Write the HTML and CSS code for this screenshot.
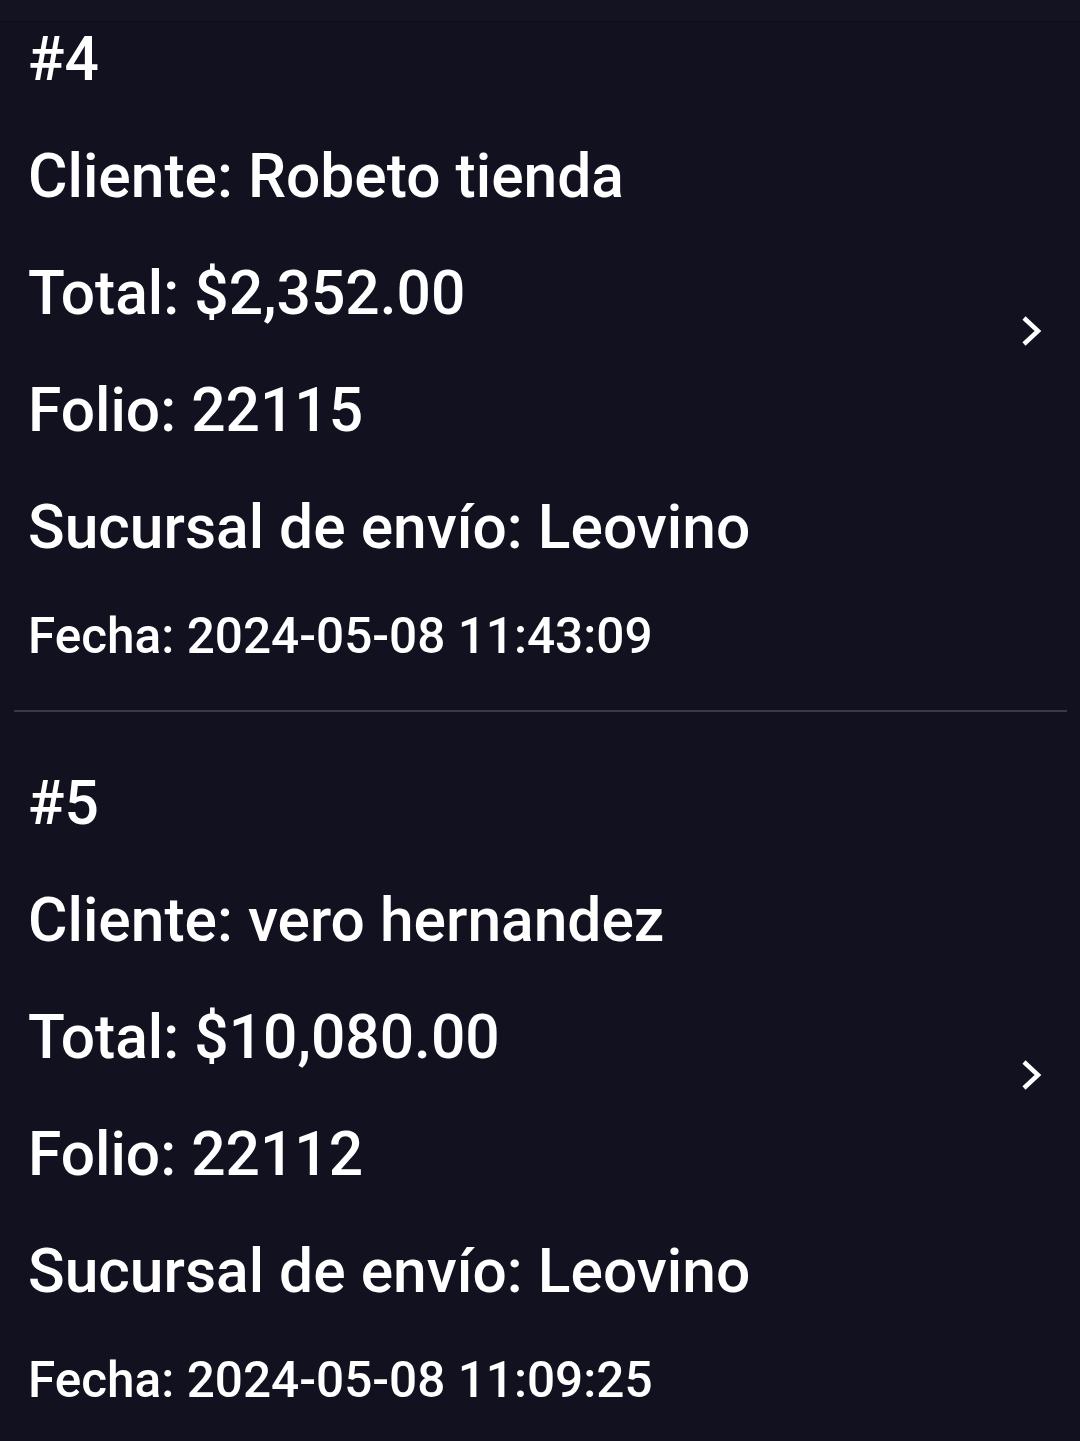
FILE: index.html
```html
<!DOCTYPE html>
<html lang="es">
<head>
    <meta charset="UTF-8">
    <meta name="viewport" content="width=device-width, initial-scale=1.0">
    <title>Pedidos</title>
    <link rel="stylesheet" href="styles.css">
</head>
<body>

    <div class="top-edge"></div>

    <!-- Order list -->
    <div class="order-list">
        <div class="order">
            <div class="order-info">
                <div class="order-line">#4</div>
                <div class="order-line">Cliente: Robeto tienda</div>
                <div class="order-line">Total: $2,352.00</div>
                <div class="order-line">Folio: 22115</div>
                <div class="order-line">Sucursal de envío: Leovino</div>
                <div class="order-line order-date">Fecha: 2024-05-08 11:43:09</div>
            </div>
            <svg class="chevron" width="28" height="34" viewBox="0 0 28 34">
                <polyline points="5,4 19,17 5,30" />
            </svg>
        </div>

        <div class="order">
            <div class="order-info">
                <div class="order-line">#5</div>
                <div class="order-line">Cliente: vero hernandez</div>
                <div class="order-line">Total: $10,080.00</div>
                <div class="order-line">Folio: 22112</div>
                <div class="order-line">Sucursal de envío: Leovino</div>
                <div class="order-line order-date">Fecha: 2024-05-08 11:09:25</div>
            </div>
            <svg class="chevron" width="28" height="34" viewBox="0 0 28 34">
                <polyline points="5,4 19,17 5,30" />
            </svg>
        </div>
    </div>

</body>
</html>
```

FILE: styles.css
```css
body {
    margin: 0;
    font-family: 'Roboto', 'Liberation Sans', sans-serif;
    background-color: #12111F;
    color: #FFFFFF;
    height: 100vh;
    overflow: hidden;
}

/* Edge of the bar above the list */
.top-edge {
    height: 21px;
    background-color: #141322;
    border-bottom: 1px solid #0D0C18;
}

/* Orders */
.order {
    display: flex;
    align-items: center;
    padding: 56px 20px 45px 28px;
    margin: 0 13px 0 14px;
    border-bottom: 2px solid #3A3947;
}

.order:first-child {
    padding-top: 2px;
}

.order:last-child {
    border-bottom: none;
}

.order-info {
    flex-grow: 1;
    display: flex;
    flex-direction: column;
    gap: 46px;
    margin-left: -14px;
}

.order-line {
    font-size: 60.5px;
    font-weight: 500;
    line-height: normal;
}

.order-date {
    font-size: 49.5px;
    margin-top: -2px;
}

/* Arrow */
.chevron {
    margin-bottom: 28px;
}

.chevron polyline {
    fill: none;
    stroke: #FFFFFF;
    stroke-width: 4.5;
}
```
